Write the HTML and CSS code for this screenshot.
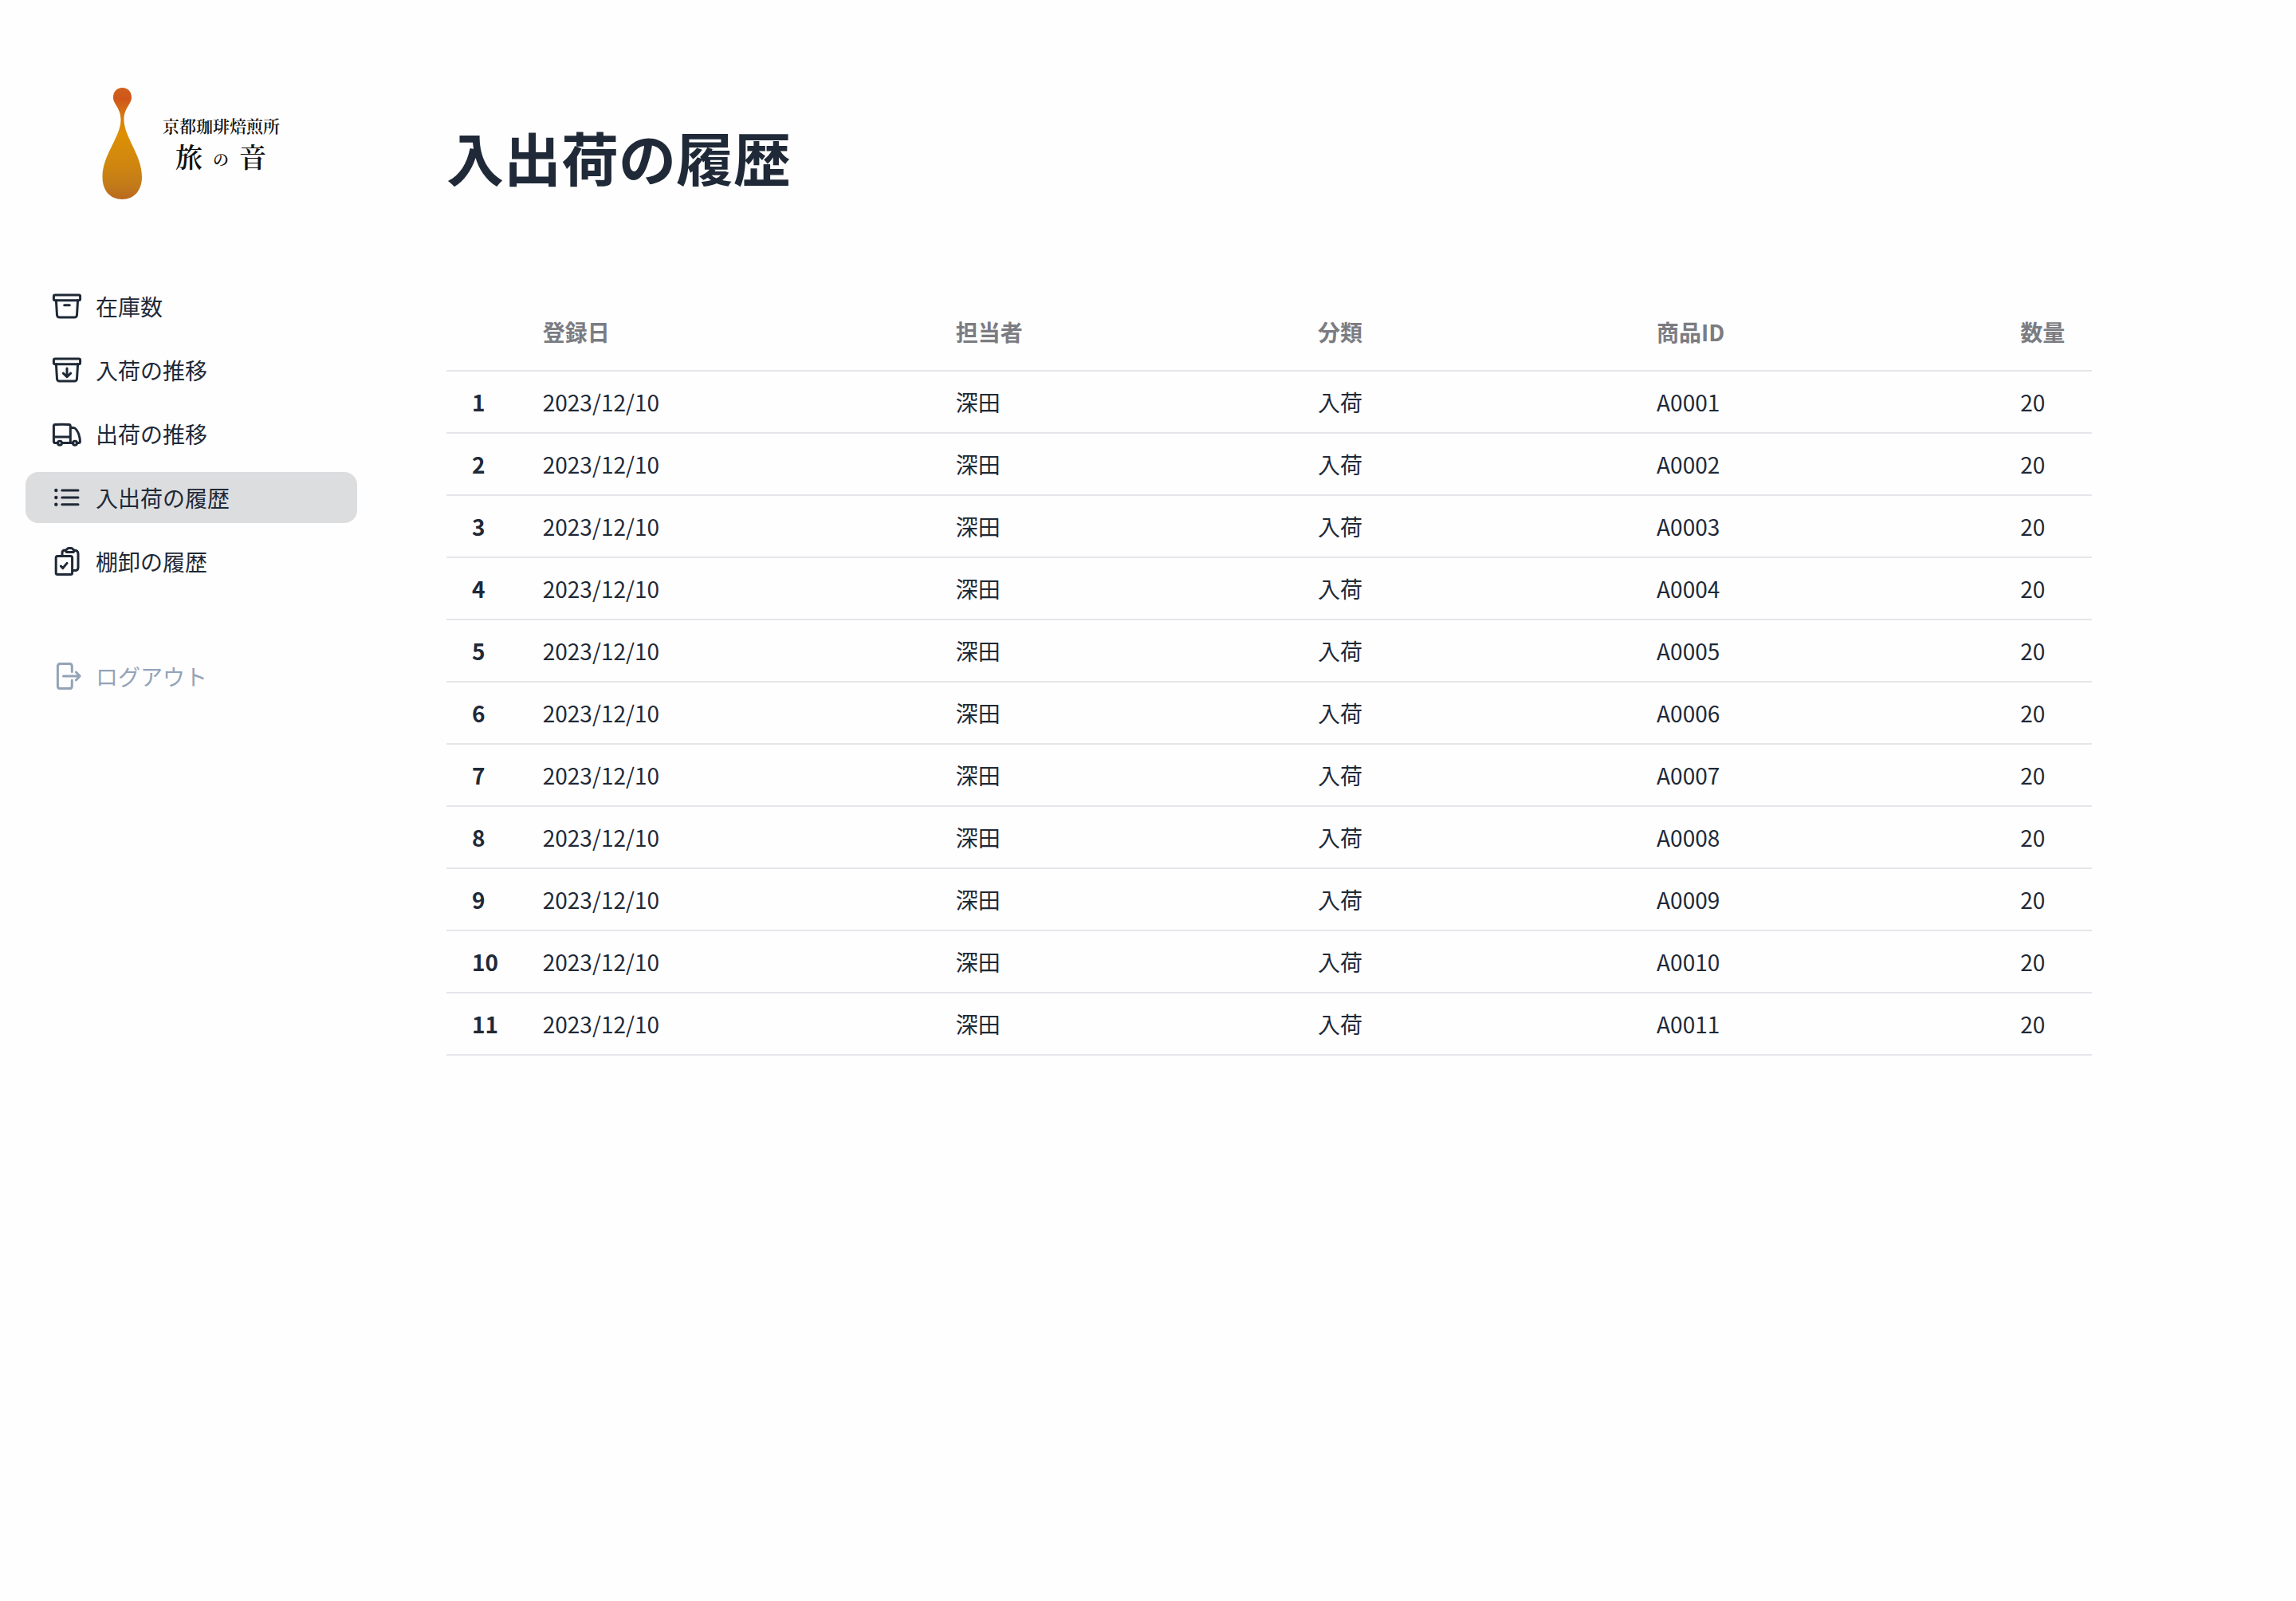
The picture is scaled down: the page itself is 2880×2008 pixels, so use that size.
FILE: index.html
```html
<!DOCTYPE html>
<html lang="ja">
<head>
<meta charset="utf-8">
<meta name="viewport" content="width=device-width, initial-scale=1">
<title>入出荷の履歴</title>
<link rel="stylesheet" href="styles.css">
</head>
<body>
<div class="layout">
  <aside class="sidebar">
    <div class="logo">
      <svg class="logo-drop" viewBox="0 0 50 140" aria-hidden="true">
        <defs>
          <linearGradient id="amber" x1="0" y1="0" x2="0" y2="1">
            <stop offset="0" stop-color="#d0601c"/>
            <stop offset="0.1" stop-color="#cf561b"/>
            <stop offset="0.25" stop-color="#d6780f"/>
            <stop offset="0.4" stop-color="#dd9004"/>
            <stop offset="0.7" stop-color="#cf8610"/>
            <stop offset="0.88" stop-color="#c27a1a"/>
            <stop offset="1" stop-color="#b9681f"/>
          </linearGradient>
        </defs>
        <path fill="url(#amber)" d="M25.5 0C32.5 0 37 5 37 12C37 21 27.500 25 27.500 40C27.500 62 50 84 50 112C50 129 40 140 25.500 140C10 140 0.500 129 0.500 112C0.500 84 23.500 62 23.500 40C23.500 25 14 21 14 12C14 5 18.500 0 25.500 0Z"/>
      </svg>
      <div class="logo-text">
        <span class="logo-sub">京都珈琲焙煎所</span>
        <span class="logo-name"><span>旅</span><span class="logo-no">の</span><span>音</span></span>
      </div>
    </div>
    <nav class="menu">
      <a class="item" href="#stock">
        <svg class="icon" viewBox="0 0 40 40"><rect x="3.4" y="6" width="33.2" height="6.8" rx="1.8"/><path d="M6.4 12.8L7.500 31Q7.700 34 10.700 34H29.300Q32.300 34 32.500 31L33.600 12.800M16.700 18.800H23.300"/></svg>
        在庫数
      </a>
      <a class="item" href="#incoming">
        <svg class="icon" viewBox="0 0 40 40"><rect x="3.4" y="6" width="33.2" height="6.8" rx="1.8"/><path d="M6.4 12.8L7.5 31Q7.7 34 10.7 34H29.3Q32.3 34 32.5 31L33.6 12.8M20 18V28.7M15.3 24.2L20 28.7L24.7 24.2"/></svg>
        入荷の推移
      </a>
      <a class="item" href="#outgoing">
        <svg class="icon" viewBox="0 0 40 40"><path d="M8.4 31.5H5.5Q3.4 31.5 3.4 29.4V10.5Q3.4 8.8 5 8.6Q13.5 7.8 22.5 8.6Q24.3 8.8 24.3 10.5V31.5M3.4 24H24.3M13.6 31.5H27.4M24.3 12.5H28Q30.2 12.5 31.5 14.5Q36.4 21.5 36.4 29.8Q36.4 31.5 34.8 31.5H32.6"/><circle cx="11" cy="31.7" r="2.5"/><circle cx="30" cy="31.7" r="2.5"/></svg>
        出荷の推移
      </a>
      <a class="item active" href="#history" aria-current="page">
        <svg class="icon" viewBox="0 0 40 40"><path d="M13.8 11H34M13.8 20H34M13.8 28.7H34"/><g class="dots"><circle cx="6.3" cy="11" r="2.2"/><circle cx="6.3" cy="20" r="2.2"/><circle cx="6.3" cy="28.7" r="2.2"/></g></svg>
        入出荷の履歴
      </a>
      <a class="item" href="#inventory">
        <svg class="icon" viewBox="0 0 40 40"><rect x="6.2" y="13.4" width="20.4" height="23.2" rx="2"/><path d="M14 13V9.5Q14 6 17.5 6H18.5M28.5 6Q34 6 34 10.5V27.5Q34 31.6 30 31.6H28M12.3 26L14.8 28.6L20 22.4M20 5Q20.5 3.4 22 3.4H25.5Q27 3.4 27.5 5Q29 5.5 29 6.8Q29 8.4 27.5 8.4H20Q18.5 8.4 18.5 6.8Q18.5 5.5 20 5"/></svg>
        棚卸の履歴
      </a>
    </nav>
    <button class="item logout" type="button">
      <svg class="icon" viewBox="0 0 40 40"><path d="M26.3 14.5V7.6Q26.3 4.4 23.1 4.4H11.7Q8.4 4.4 8.4 7.6V32.4Q8.4 35.6 11.7 35.6H23.1Q26.3 35.6 26.3 32.4V25.2M15.5 20H36M31.4 15L36.2 20L31.4 25"/></svg>
      ログアウト
    </button>
  </aside>
  <main class="main">
    <h1 class="title">入出荷の履歴</h1>
    <table class="table">
      <colgroup><col class="c-no"><col class="c-date"><col class="c-person"><col class="c-kind"><col class="c-id"><col class="c-qty"></colgroup>
      <thead>
        <tr><td></td><th scope="col">登録日</th><th scope="col">担当者</th><th scope="col">分類</th><th scope="col">商品ID</th><th scope="col">数量</th></tr>
      </thead>
      <tbody>
        <tr><th scope="row">1</th><td>2023/12/10</td><td>深田</td><td>入荷</td><td>A0001</td><td>20</td></tr>
        <tr><th scope="row">2</th><td>2023/12/10</td><td>深田</td><td>入荷</td><td>A0002</td><td>20</td></tr>
        <tr><th scope="row">3</th><td>2023/12/10</td><td>深田</td><td>入荷</td><td>A0003</td><td>20</td></tr>
        <tr><th scope="row">4</th><td>2023/12/10</td><td>深田</td><td>入荷</td><td>A0004</td><td>20</td></tr>
        <tr><th scope="row">5</th><td>2023/12/10</td><td>深田</td><td>入荷</td><td>A0005</td><td>20</td></tr>
        <tr><th scope="row">6</th><td>2023/12/10</td><td>深田</td><td>入荷</td><td>A0006</td><td>20</td></tr>
        <tr><th scope="row">7</th><td>2023/12/10</td><td>深田</td><td>入荷</td><td>A0007</td><td>20</td></tr>
        <tr><th scope="row">8</th><td>2023/12/10</td><td>深田</td><td>入荷</td><td>A0008</td><td>20</td></tr>
        <tr><th scope="row">9</th><td>2023/12/10</td><td>深田</td><td>入荷</td><td>A0009</td><td>20</td></tr>
        <tr><th scope="row">10</th><td>2023/12/10</td><td>深田</td><td>入荷</td><td>A0010</td><td>20</td></tr>
        <tr><th scope="row">11</th><td>2023/12/10</td><td>深田</td><td>入荷</td><td>A0011</td><td>20</td></tr>
      </tbody>
    </table>
  </main>
</div>
</body>
</html>
```
FILE: styles.css
```css
* {
  box-sizing: border-box;
}

body {
  margin: 0;
  background: #fefefe;
  color: #1f2937;
  font-family: "Noto Sans CJK JP", sans-serif;
  font-size: 28px;
  line-height: 40px;
}

.layout {
  display: flex;
  min-height: 100vh;
}

.sidebar {
  flex: none;
  width: 480px;
  padding: 110px 32px 32px;
}

.logo {
  display: flex;
  align-items: flex-start;
  gap: 26px;
  padding-left: 96px;
  margin-bottom: 102px;
}

.logo-drop {
  width: 50px;
  height: 140px;
}

.logo-text {
  padding-top: 35px;
  color: #111;
  font-family: "Noto Serif CJK JP", "Noto Serif JP", "Noto Sans CJK JP", serif;
  font-weight: 600;
}

.logo-sub {
  display: block;
  font-size: 21px;
  line-height: 24px;
}

.logo-name {
  display: flex;
  align-items: center;
  gap: 13px;
  padding-left: 16px;
  font-size: 34px;
  line-height: 46px;
}

.logo-no {
  padding-top: 8px;
  font-size: 20px;
}

.menu {
  display: flex;
  flex-direction: column;
  gap: 16px;
}

.item {
  display: flex;
  align-items: center;
  gap: 16px;
  width: 100%;
  height: 64px;
  padding: 0 32px;
  border: 0;
  border-radius: 16px;
  background: none;
  color: inherit;
  font: inherit;
  text-align: left;
  text-decoration: none;
  cursor: pointer;
}

.item.active {
  background: #dcdddf;
}

.item.logout {
  margin-top: 80px;
  color: #94a3b8;
}

.icon {
  flex: none;
  width: 40px;
  height: 40px;
  fill: none;
  stroke: currentColor;
  stroke-width: 3;
  stroke-linecap: round;
  stroke-linejoin: round;
}

.dots {
  fill: currentColor;
  stroke: none;
}

.main {
  flex: 1;
  min-width: 0;
  padding: 156px 256px 160px 80px;
}

.title {
  margin: 0 0 132px;
  font-size: 72px;
  font-weight: 700;
  line-height: 80px;
}

.table {
  width: 100%;
  table-layout: fixed;
  border-collapse: separate;
  border-spacing: 0;
  line-height: 28px;
  text-align: left;
}

.table th,
.table td {
  padding: 24px 32px;
  border-bottom: 2px solid #e5e6ea;
  white-space: nowrap;
}

.table thead th {
  padding: 34px 32px;
  color: #7b7c82;
}

.c-no { width: 4.3%; }
.c-date { width: 25.1%; }
.c-person { width: 22%; }
.c-kind { width: 20.6%; }
.c-id { width: 22.1%; }
.c-qty { width: 5.9%; }
```
